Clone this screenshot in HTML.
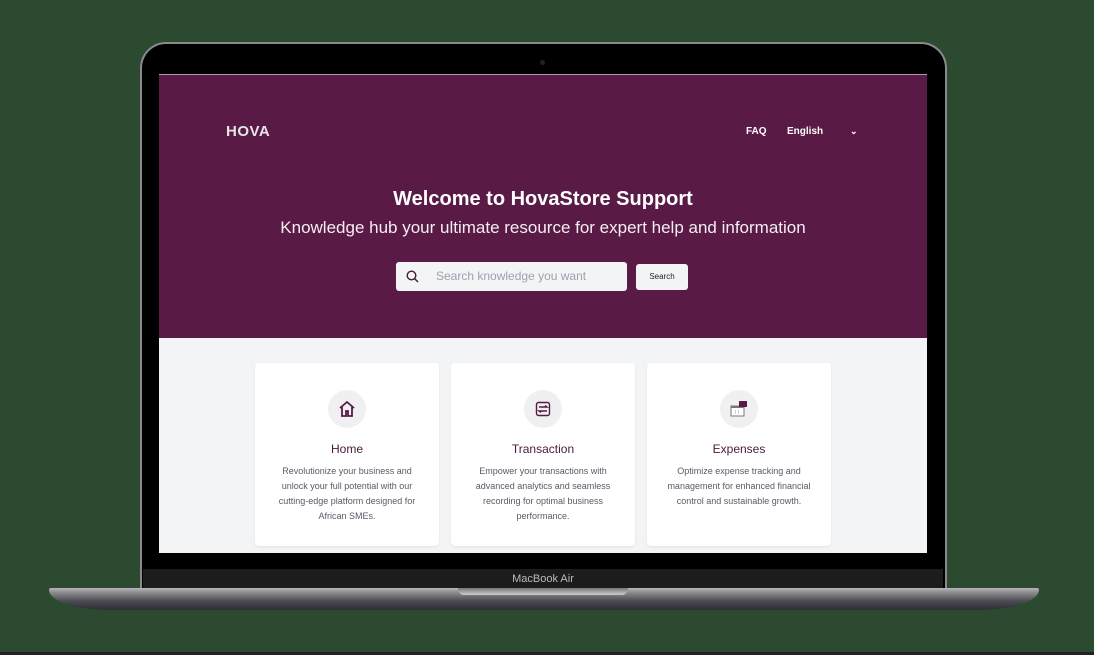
<!DOCTYPE html>
<html><head><style>
*{margin:0;padding:0;box-sizing:border-box}
body{width:1094px;height:655px;background:#2c4a2f;position:relative;overflow:hidden;font-family:"Liberation Sans",sans-serif}
.lid{position:absolute;left:140px;top:42px;width:807px;height:548px;background:#000;border-radius:26px 26px 0 0;border:2px solid #8a8a8e;border-bottom:none}
.chin{position:absolute;left:143px;top:569px;width:800px;height:20px;background:#1c1c1c;color:#bbb;font-size:11px;text-align:center;line-height:20px}
.base{position:absolute;left:49px;top:588px;width:990px;height:22px;background:linear-gradient(#b8b8bc 0,#8c8c90 20%,#4a4a52 60%,#2e2e36 100%);border-radius:2px 2px 60px 60px / 2px 2px 20px 20px}
.notch{position:absolute;left:458px;top:588px;width:170px;height:7px;background:linear-gradient(#777,#ccc);border-radius:0 0 6px 6px}
.cam{position:absolute;left:540px;top:60px;width:5px;height:5px;border-radius:50%;background:#222}
.screen{position:absolute;left:159px;top:74px;width:768px;height:479px;background:#f3f4f6;overflow:hidden}
.hero{height:264px;background:#591a46;border-top:1px solid #b09aaa;position:relative;color:#fff}
.logo{position:absolute;left:67px;top:48px;font-weight:bold;font-size:15px;letter-spacing:0.5px;color:#e6e6e6}
.nav{position:absolute;top:51px;font-size:10px;font-weight:bold}
h1{position:absolute;top:113px;width:100%;text-align:center;font-size:20px;font-weight:bold}
.sub{position:absolute;top:143px;width:100%;text-align:center;font-size:17px;font-weight:300;color:#f4eef2}
.search{position:absolute;left:237px;top:187px;width:231px;height:29px;background:#f3f4f6;border-radius:3px;color:#9aa3b0;font-size:12px;line-height:29px;padding-left:40px}
.btn{position:absolute;left:477px;top:189px;width:52px;height:26px;background:#f3f4f6;border-radius:3px;color:#222;font-size:8px;text-align:center;line-height:26px}
.card{position:absolute;top:289px;width:184px;height:183px;background:#fff;border-radius:4px;box-shadow:0 1px 2px rgba(0,0,0,.08);text-align:center}
.ic{width:38px;height:38px;border-radius:50%;background:#f0f0f2;margin:27px auto 0;display:flex;align-items:center;justify-content:center}
.card h3{font-size:12px;font-weight:normal;color:#4a1a3c;margin-top:14px}
.card p{font-size:9px;line-height:15px;color:#555b66;margin:8px 16px 0}
</style></head><body>
<div class="lid"></div>
<div class="cam"></div>
<div class="chin">MacBook Air</div>
<div class="base"></div>
<div class="notch"></div>
<div class="screen">
 <div class="hero">
  <div class="logo">HOVA</div>
  <div class="nav" style="left:587px">FAQ</div>
  <div class="nav" style="left:628px">English</div>
  <div class="nav" style="left:691px;font-size:9px">&#8964;</div>
  <h1>Welcome to HovaStore Support</h1>
  <div class="sub">Knowledge hub your ultimate resource for expert help and information</div>
  <div class="search"><svg style="position:absolute;left:10px;top:8px" width="13" height="13" viewBox="0 0 13 13"><circle cx="5.5" cy="5.5" r="4.3" fill="none" stroke="#4a1a3c" stroke-width="1.4"/><path d="M8.6 8.6L12 12" stroke="#4a1a3c" stroke-width="1.5"/></svg>Search knowledge you want</div>
  <div class="btn">Search</div>
 </div>
 <div class="card" style="left:96px"><div class="ic"><svg width="18" height="18" viewBox="0 0 18 18" fill="none" stroke="#591a46" stroke-width="1.8"><path d="M2 8L9 2l7 6M4 7v9h4v-5h2v5h4V7"/></svg></div><h3>Home</h3><p>Revolutionize your business and unlock your full potential with our cutting-edge platform designed for African SMEs.</p></div>
 <div class="card" style="left:292px"><div class="ic"><svg width="16" height="16" viewBox="0 0 16 16" fill="none" stroke="#591a46" stroke-width="1.4"><rect x="1.5" y="1.5" width="13" height="13" rx="2"/><path d="M4 6h8l-2-1.5M12 10H4l2 1.5"/></svg></div><h3>Transaction</h3><p>Empower your transactions with advanced analytics and seamless recording for optimal business performance.</p></div>
 <div class="card" style="left:488px"><div class="ic"><svg width="20" height="18" viewBox="0 0 20 18"><rect x="2" y="6" width="13" height="10" fill="#fff" stroke="#777" stroke-width="1"/><rect x="2" y="6" width="13" height="2" fill="#777"/><rect x="10" y="1" width="8" height="6" fill="#591a46"/><path d="M6 11h1M9 11h1M6 13h1M9 13h1" stroke="#999"/></svg></div><h3>Expenses</h3><p>Optimize expense tracking and management for enhanced financial control and sustainable growth.</p></div>
</div>
<div style="position:absolute;left:0;top:652px;width:1094px;height:3px;background:#222"></div>
</body></html>
